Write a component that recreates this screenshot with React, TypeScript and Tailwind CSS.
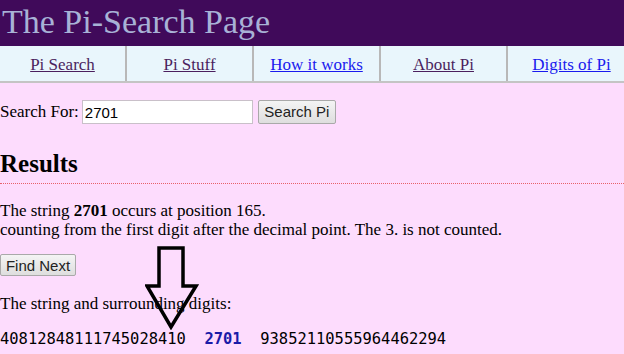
import React from "react";

const serif = { fontFamily: '"Liberation Serif", "Times New Roman", serif' };

function NavCell({ label, visited, last }: { label: string; visited: boolean; last?: boolean }) {
  return (
    <div
      className={`w-[127px] shrink-0 flex items-center justify-center pt-[2px] ${last ? "" : "border-r-2 border-[#b8b8b8]"}`}
    >
      <a
        href="#"
        className={`underline text-[17px] ${visited ? "text-[#4b1f5e]" : "text-[#1a1aee]"}`}
      >
        {label}
      </a>
    </div>
  );
}

export default function App() {
  return (
    <div className="w-[624px] h-[354px] overflow-hidden bg-[#fddcfd] relative text-black" style={serif}>
      <div className="h-[46px] bg-[#400a5a] pl-[2px] text-[34px] leading-[44px] text-[#a8b2d6]">
        The Pi-Search Page
      </div>
      <div className="h-[37px] bg-[#e9f6fc] border-b-2 border-[#c4c4c4] flex">
        <NavCell label="Pi Search" visited />
        <NavCell label="Pi Stuff" visited />
        <NavCell label="How it works" visited={false} />
        <NavCell label="About Pi" visited />
        <NavCell label="Digits of Pi" visited={false} last />
      </div>

      <div className="mt-[17px] flex items-center h-[24px] text-[17px]">
        <span>Search For:</span>
        <input
          readOnly
          value="2701"
          className="ml-[3px] w-[171px] h-[24px] bg-white border border-[#c9c0c9] px-[2px] text-[15px] outline-none"
          style={{ fontFamily: '"Liberation Sans", Arial, sans-serif' }}
        />
        <button
          className="ml-[5px] w-[78px] h-[24px] rounded-[2px] border border-[#a9a9a9] bg-gradient-to-b from-[#f4f4f4] to-[#dedede] text-[15px] text-[#222]"
          style={{ fontFamily: '"Liberation Sans", Arial, sans-serif' }}
        >
          Search Pi
        </button>
      </div>

      <h2 className="mt-[26px] text-[25px] font-bold leading-[28px] pb-[5px] border-b border-dotted border-[#e8606a]">
        Results
      </h2>

      <div className="mt-[17px] text-[17px] leading-[19px]">
        <div>
          The string <b>2701</b> occurs at position 165.
        </div>
        <div>counting from the first digit after the decimal point. The 3. is not counted.</div>
      </div>

      <button
        className="mt-[15px] block w-[76px] h-[22px] rounded-[2px] border border-[#a9a9a9] bg-gradient-to-b from-[#f4f4f4] to-[#dedede] text-[15px] text-[#222]"
        style={{ fontFamily: '"Liberation Sans", Arial, sans-serif' }}
      >
        Find Next
      </button>

      <div className="mt-[18px] text-[17px] leading-[19px]">The string and surrounding digits:</div>

      <div
        className="mt-[17px] text-[15.45px] leading-[19px] whitespace-pre"
        style={{ fontFamily: '"DejaVu Sans Mono", "Liberation Mono", monospace' }}
      >
        40812848111745028410  <b className="text-[#1a1aa8]">2701</b>  93852110555964462294
      </div>

      <svg className="absolute left-[145px] top-[246px]" width="54" height="84" viewBox="0 0 54 84">
        <path
          d="M14 2 L38 2 L38 40 L51 40 L26 81 L2 40 L14 40 Z"
          fill="none"
          stroke="black"
          strokeWidth="3.5"
          strokeLinejoin="miter"
        />
      </svg>
    </div>
  );
}
